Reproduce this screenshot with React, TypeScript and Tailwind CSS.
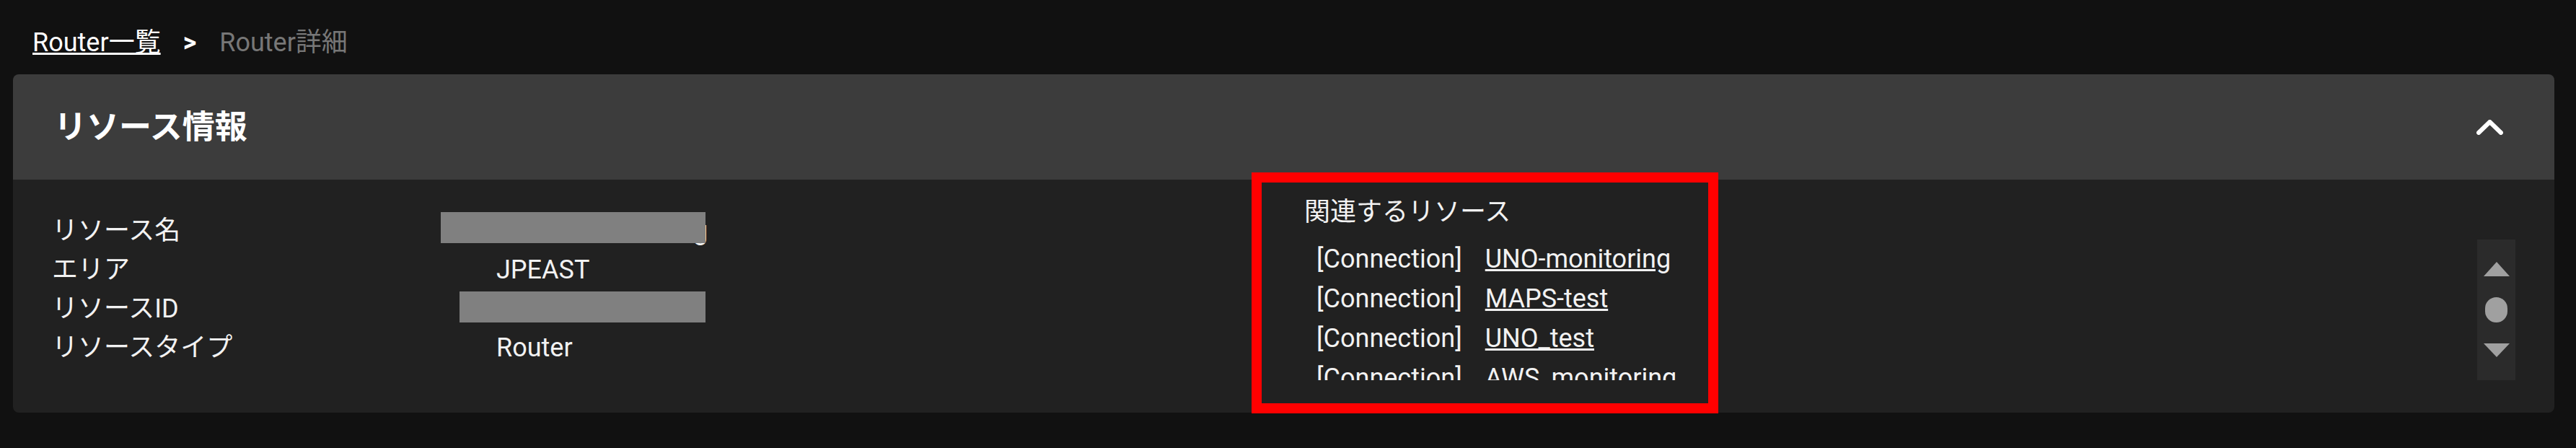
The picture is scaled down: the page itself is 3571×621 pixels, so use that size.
import React from 'react';

const related = ['UNO-monitoring', 'MAPS-test', 'UNO_test', 'AWS_monitoring', 'AWS-test'];

const App: React.FC = () => {
  return (
    <div className="relative min-h-[621px] w-full bg-[#111111] pl-[18px] pr-[30px] pt-[32px] font-['Roboto','Noto_Sans_CJK_JP',sans-serif] text-[#f2f2f2]">
      {/* breadcrumb */}
      <nav className="flex h-[54px] items-center pl-[27px] text-[36px] leading-[54px]">
        <a className="text-white underline">Router一覧</a>
        <span className="ml-[31px] mr-[32px] font-bold text-white">&gt;</span>
        <span className="text-[#777777]">Router詳細</span>
      </nav>

      <section className="mt-[17px] overflow-hidden rounded-lg">
        <header className="flex h-[146px] items-center justify-between bg-[#3c3c3c] pl-[57px] pr-[71px]">
          <h2 className="text-[45px] font-bold leading-none text-white">リソース情報</h2>
          <svg width="37" height="21" viewBox="0 0 37 21" className="text-white">
            <polyline points="3,18 18.5,3 34,18" fill="none" stroke="currentColor" strokeWidth="6" strokeLinecap="round" strokeLinejoin="round" />
          </svg>
        </header>

        <div className="flex h-[323px] bg-[#212121] px-[54px]">
          {/* left: attributes */}
          <div className="w-[1708px] pt-[44px] text-[36px] leading-[54px]">
            <div className="grid grid-cols-[616px_1fr]">
              <div>リソース名</div>
              <div className="relative">
                <span className="ml-[273px]">g</span>
                <div className="absolute left-[-77px] top-[1px] h-[43px] w-[367px] bg-[#808080]" />
              </div>
              <div>エリア</div>
              <div>JPEAST</div>
              <div>リソースID</div>
              <div className="relative">
                <div className="absolute left-[-51px] top-[3px] h-[43px] w-[341px] bg-[#808080]" />
              </div>
              <div>リソースタイプ</div>
              <div>Router</div>
            </div>
          </div>

          {/* right: related resources */}
          <div className="flex-1 pl-[28px] pt-[18px] text-[36px] leading-[54px]">
            <div>関連するリソース</div>
            <div className="mt-[11px] flex">
              <ul className="h-[195px] flex-1 overflow-hidden pl-[17px] leading-[55px]">
                {related.map((name) => (
                  <li key={name} className="whitespace-nowrap">
                    <span>[Connection]</span>
                    <a className="ml-[32px] underline">{name}</a>
                  </li>
                ))}
              </ul>
              <div className="flex h-[195px] w-[53px] flex-col items-center bg-[#2b2b2b] pt-[31px]">
                <svg width="36" height="20" viewBox="0 0 36 20">
                  <polygon points="18,0 36,20 0,20" fill="#a0a0a0" />
                </svg>
                <div className="mt-[29px] h-[35px] w-[31px] rounded-full bg-[#a0a0a0]" />
                <svg width="36" height="19" viewBox="0 0 36 19" className="mt-[29px]">
                  <polygon points="0,0 36,0 18,19" fill="#a0a0a0" />
                </svg>
              </div>
            </div>
          </div>
        </div>
      </section>

      {/* annotation frame */}
      <div className="absolute left-[1735px] top-[239px] h-[334px] w-[647px] border-[14px] border-[#ff0000]" />
    </div>
  );
};

export default App;
